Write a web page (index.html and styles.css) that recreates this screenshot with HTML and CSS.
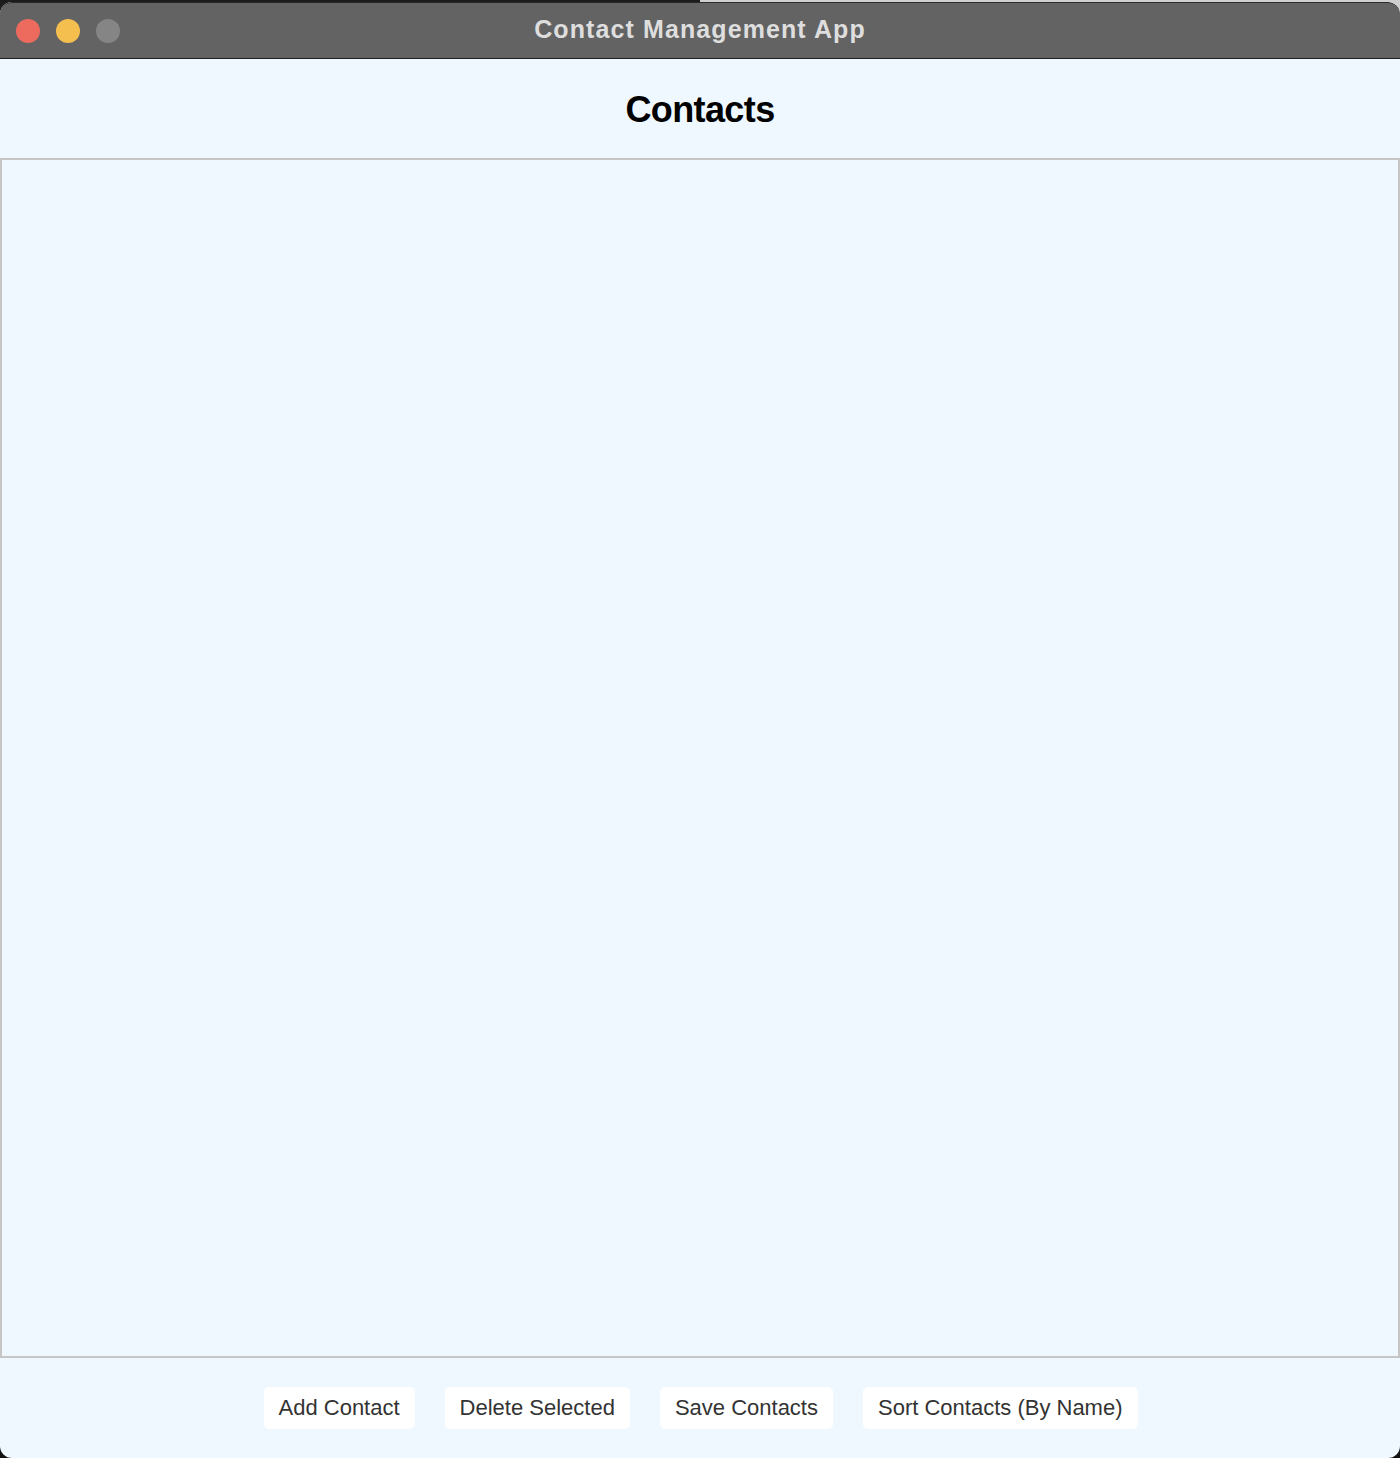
FILE: index.html
```html
<!DOCTYPE html>
<html>
<head>
<meta charset="utf-8">
<title>Contact Management App</title>
<link rel="stylesheet" href="styles.css">
</head>
<body>
<div class="window">
  <div class="titlebar">
    <div class="lights">
      <span class="light red"></span>
      <span class="light yellow"></span>
      <span class="light gray"></span>
    </div>
    <div class="title">Contact Management App</div>
    <div class="spacer"></div>
  </div>
  <div class="header">
    <h1 class="heading">Contacts</h1>
  </div>
  <div class="listbox"></div>
  <div class="footer">
    <button class="btn">Add Contact</button>
    <button class="btn">Delete Selected</button>
    <button class="btn">Save Contacts</button>
    <button class="btn">Sort Contacts (By Name)</button>
  </div>
</div>
</body>
</html>
```
FILE: styles.css
```css
html, body {
  margin: 0;
  padding: 0;
}
body {
  width: 1400px;
  height: 1458px;
  overflow: hidden;
  background: linear-gradient(to right, #1c1c1c 0, #1c1c1c 50%, #cfcfcf 50%, #cfcfcf 100%) top left / 100% 16px no-repeat, #111111;
  font-family: "Liberation Sans", Arial, sans-serif;
}
.window {
  margin-top: 2px;
  height: 1456px;
  border-radius: 12px;
  overflow: hidden;
  background: #eff7ff;
  display: flex;
  flex-direction: column;
}
.titlebar {
  height: 55px;
  flex: none;
  background: #636363;
  border-top: 1px solid #2a2a2a;
  border-bottom: 1px solid #1e1e1e;
  display: grid;
  grid-template-columns: 1fr auto 1fr;
  align-items: center;
  border-radius: 12px 12px 0 0;
}
.lights {
  display: flex;
  gap: 16px;
  padding-left: 16px;
  padding-top: 1px;
}
.light {
  width: 24px;
  height: 24px;
  border-radius: 50%;
  display: block;
}
.red { background: #ed6a5e; }
.yellow { background: #f5bf4f; }
.gray { background: #858585; }
.title {
  color: #dedede;
  font-weight: bold;
  font-size: 25px;
  letter-spacing: 1.1px;
  margin-top: -2px;
}
.header {
  height: 99px;
  flex: none;
  display: flex;
  align-items: center;
  justify-content: center;
}
.heading {
  margin: 0;
  font-size: 36px;
  font-weight: bold;
  color: #000;
  letter-spacing: -0.6px;
  padding-top: 3px;
}
.listbox {
  height: 1196px;
  flex: none;
  border: 2px solid #c6c6c6;
  background: #eff7ff;
}
.footer {
  flex: 1;
  display: flex;
  justify-content: center;
  align-items: flex-start;
  gap: 30px;
  padding-top: 29px;
  padding-left: 1px;
}
.btn {
  height: 42px;
  padding: 0 15px;
  border: none;
  border-radius: 5px;
  background: #ffffff;
  color: #333333;
  font-family: "Liberation Sans", Arial, sans-serif;
  font-size: 22px;
  line-height: 42px;
}
```
